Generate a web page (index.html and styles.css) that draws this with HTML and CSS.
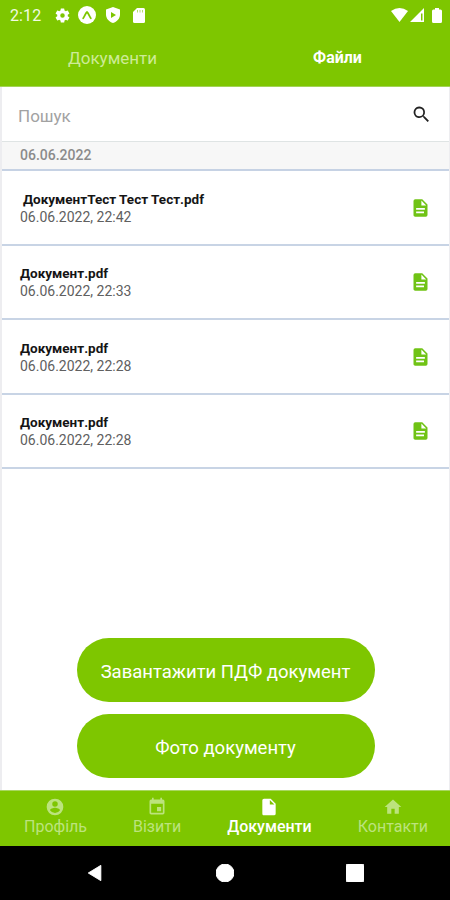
FILE: index.html
```html
<!DOCTYPE html>
<html lang="uk">
<head>
<meta charset="utf-8">
<title>Файли</title>
<link rel="stylesheet" href="styles.css">
</head>
<body>
<svg class="defs" width="0" height="0">
  <symbol id="doc" viewBox="0 0 24 24"><path fill-rule="evenodd" d="M14 2H6a2 2 0 0 0-2 2v16c0 1.100.9 2 2 2h12a2 2 0 0 0 2-2V8l-6-6zm2 16H7v-2h9v2zm1-4H7v-2h10v2zm-4-5V3.500L18.500 9H13z"/></symbol>
</svg>
<div class="app">
  <header class="top">
    <div class="status">
      <span class="clock">2:12</span>
      <svg class="s-gear" viewBox="0 0 24 24"><path fill-rule="evenodd" d="M19.400 13a7.500 7.500 0 0 0 0-2l2.100-1.600a.5.5 0 0 0 .1-.6l-2-3.500a.5.5 0 0 0-.6-.2l-2.500 1a7.300 7.300 0 0 0-1.700-1L14.500 2.400A.5.5 0 0 0 14 2h-4a.5.5 0 0 0-.5.400L9.200 5.100a7.700 7.700 0 0 0-1.700 1L5 5.100a.5.5 0 0 0-.6.200l-2 3.500a.5.5 0 0 0 .1.600L4.600 11a8 8 0 0 0 0 2l-2.100 1.600a.5.5 0 0 0-.1.600l2 3.500c.1.200.4.300.6.200l2.500-1c.5.400 1.100.7 1.700 1l.3 2.700c0 .2.200.4.500.4h4c.3 0 .5-.2.500-.4l.3-2.700a7.300 7.300 0 0 0 1.700-1l2.500 1c.2.100.5 0 .6-.2l2-3.500a.5.5 0 0 0-.1-.6L19.400 13zM12 15.200a3.200 3.200 0 1 1 0-6.400 3.200 3.200 0 0 1 0 6.400z"/></svg>
      <svg class="s-expo" viewBox="0 0 18 18"><circle cx="9" cy="9" r="9"/><path class="cut" d="M5.200 12.200C6.600 10.500 7.500 7 9 6c1.500 1 2.400 4.500 3.800 6.200"/></svg>
      <svg class="s-shield" viewBox="0 0 14 16"><path fill-rule="evenodd" d="M7 0l7 2.600v5C14 11.600 11 15 7 16 3 15 0 11.600 0 7.600v-5L7 0zM5 5v6l5-3-5-3z"/></svg>
      <svg class="s-card" viewBox="0 0 12 15"><path d="M4 0h6.500A1.500 1.500 0 0 1 12 1.500v12a1.500 1.500 0 0 1-1.500 1.500h-9A1.500 1.500 0 0 1 0 13.500V4l4-4z"/><path class="slots" d="M4.500 2v2.500M7 2v2.500M9.500 2v2.500"/></svg>
      <span class="gap"></span>
      <svg class="s-wifi" viewBox="0 0 17 14"><path d="M0 3Q8.500-3 17 3L8.500 14z"/></svg>
      <svg class="s-signal" viewBox="0 0 14 14"><path fill-rule="evenodd" d="M14 0v14H0L14 0zM11 5.500v7h1.500v-7z"/></svg>
      <svg class="s-battery" viewBox="0 0 10 15"><path d="M3 0h4v1.500h1.500A1.500 1.500 0 0 1 10 3v10.500A1.500 1.500 0 0 1 8.500 15h-7A1.500 1.500 0 0 1 0 13.500V3a1.500 1.500 0 0 1 1.500-1.500H3z"/></svg>
    </div>
    <nav class="tabs"><span class="tab">Документи</span><span class="tab active">Файли</span></nav>
  </header>
  <main class="content">
    <div class="search"><span>Пошук</span>
      <svg viewBox="0 0 24 24"><path d="M15.500 14h-.8l-.3-.3A6.500 6.500 0 1 0 13.700 14.400l.3.300v.8l5 5 1.500-1.500-5-5zm-6 0a4.500 4.500 0 1 1 0-9 4.500 4.500 0 0 1 0 9z"/></svg></div>
    <div class="date">06.06.2022</div>
    <ul class="files">
      <li><div><b class="indent">ДокументТест Тест Тест.pdf</b><time>06.06.2022, 22:42</time></div><svg><use href="#doc"/></svg></li>
      <li><div><b>Документ.pdf</b><time>06.06.2022, 22:33</time></div><svg><use href="#doc"/></svg></li>
      <li><div><b>Документ.pdf</b><time>06.06.2022, 22:28</time></div><svg><use href="#doc"/></svg></li>
      <li><div><b>Документ.pdf</b><time>06.06.2022, 22:28</time></div><svg><use href="#doc"/></svg></li>
    </ul>
    <div class="actions"><button class="upload">Завантажити ПДФ документ</button><button>Фото документу</button></div>
  </main>
  <nav class="bottom">
    <div class="item profile"><svg viewBox="0 0 24 24"><path fill-rule="evenodd" d="M12 2a10 10 0 1 0 0 20 10 10 0 0 0 0-20zm0 3a3.300 3.300 0 1 1 0 6.600A3.300 3.300 0 0 1 12 5zm0 14.200a7.200 7.200 0 0 1-6-3.200c0-2 4-3.100 6-3.100s6 1.100 6 3.100a7.200 7.200 0 0 1-6 3.200z"/></svg><span>Профіль</span></div>
    <div class="item visits"><svg viewBox="0 0 24 24"><path fill-rule="evenodd" d="M17 12h-5v5h5v-5zM16 1v2H8V1H6v2H5a2 2 0 0 0-2 2v14c0 1.100.9 2 2 2h14a2 2 0 0 0 2-2V5a2 2 0 0 0-2-2h-1V1h-2zm3 18H5V8h14v11z"/></svg><span>Візити</span></div>
    <div class="item docs active"><svg viewBox="0 0 24 24"><path fill-rule="evenodd" d="M6 2a2 2 0 0 0-2 2v16c0 1.100.9 2 2 2h12a2 2 0 0 0 2-2V8l-6-6H6zm7 7V3.500L18.500 9H13z"/></svg><span>Документи</span></div>
    <div class="item contacts"><svg viewBox="0 0 24 24"><path d="M10 20v-6h4v6h5v-8h3L12 3 2 12h3v8z"/></svg><span>Контакти</span></div>
  </nav>
  <footer class="system">
    <svg viewBox="0 0 18 20"><path d="M15.500 1.500v17L1.500 10z"/></svg>
    <svg viewBox="0 0 18 18"><circle cx="9" cy="9" r="9"/></svg>
    <svg viewBox="0 0 19 19"><rect width="19" height="19" rx="2"/></svg>
  </footer>
</div>
</body>
</html>
```
FILE: styles.css
```css
* { box-sizing: border-box; }
body { margin: 0; font-family: Roboto, "Liberation Sans", sans-serif; background: #fff; }
svg { display: block; flex: none; fill: currentColor; }
.defs { position: absolute; }
.app { width: 450px; height: 900px; display: flex; flex-direction: column; overflow: hidden; }
.top { height: 87px; background: #7ec600; color: #fff; border-bottom: 1px solid #a3d357; }
.status { height: 30px; display: flex; align-items: center; padding: 0 8px 0 10px; }
.clock { width: 44px; font-size: 16px; letter-spacing: .1px; color: #f2fbe2; }
.s-gear { width: 17px; height: 17px; margin-right: 7px; }
.s-expo { width: 18px; height: 18px; margin-right: 10px; }
.s-expo .cut { fill: none; stroke: #7ec600; stroke-width: 1.8; stroke-linecap: round; }
.s-shield { width: 14px; height: 16px; margin-right: 13px; }
.s-card { width: 12px; height: 15px; }
.slots { fill: none; stroke: #b5de6c; stroke-width: 1; }
.gap { flex: 1; }
.s-wifi { width: 17px; height: 14px; margin-right: 2px; }
.s-signal { width: 14px; height: 14px; margin-right: 8px; }
.s-battery { width: 10px; height: 15px; }
.tabs { height: 56px; display: grid; grid-template-columns: 1fr 1fr; align-items: center; text-align: center; font-size: 17px; line-height: 20px; }
.tab { color: #cdeb97; }
.tab.active { color: #fff; font-weight: 700; font-size: 16px; }
.content { height: 703px; display: flex; flex-direction: column; border: solid #ededf0; border-width: 0 1px 0 2px; }
.search { height: 54px; display: flex; align-items: center; justify-content: space-between; padding: 3px 17px 0 16px; color: #a2a2a2; font-size: 17px; }
.search svg { width: 21px; height: 21px; color: #222; margin-top: -3px; }
.date { height: 28px; background: #f7f7f7; border-top: 1px solid #dfe4e4; padding-left: 18px; font-size: 14px; line-height: 27px; color: #8b8b8b; font-weight: 500; }
.files { list-style: none; margin: 0; padding: 0; border-top: 2px solid #c6d2e4; }
.files li { height: 74.5px; border-bottom: 2px solid #c8d4e5; display: flex; align-items: center; justify-content: space-between; padding: 1px 18px 0; }
.files b, .files time { display: block; line-height: 18px; white-space: nowrap; }
.files b { font-size: 13.5px; color: #151515; }
.files .indent { padding-left: 3px; }
.files time { font-size: 14px; color: #606060; }
.files svg { width: 21px; height: 22px; color: #70c315; }
.actions { margin-top: auto; padding-bottom: 12px; display: flex; flex-direction: column; align-items: center; gap: 12px; }
button { width: 298px; height: 64px; padding: 3px 0 0; border: 0; border-radius: 32px; background: #7ec600; color: #fff; font: 18.5px Roboto, sans-serif; }
.bottom { height: 56px; background: #7ec600; border-top: 1px solid #a8d760; display: flex; justify-content: space-between; padding: 6px 22px 0 24px; color: #bce37d; }
.item { display: flex; flex-direction: column; align-items: center; font-size: 16px; line-height: 20px; }
.item svg { width: 20px; height: 20px; }
.item.active { color: #fff; font-weight: 500; }
.system { height: 54px; background: #000; color: #fff; display: flex; justify-content: space-between; align-items: center; padding: 0 86px; }
.system svg { width: 18px; height: 18px; stroke: currentColor; stroke-linejoin: round; }
```
